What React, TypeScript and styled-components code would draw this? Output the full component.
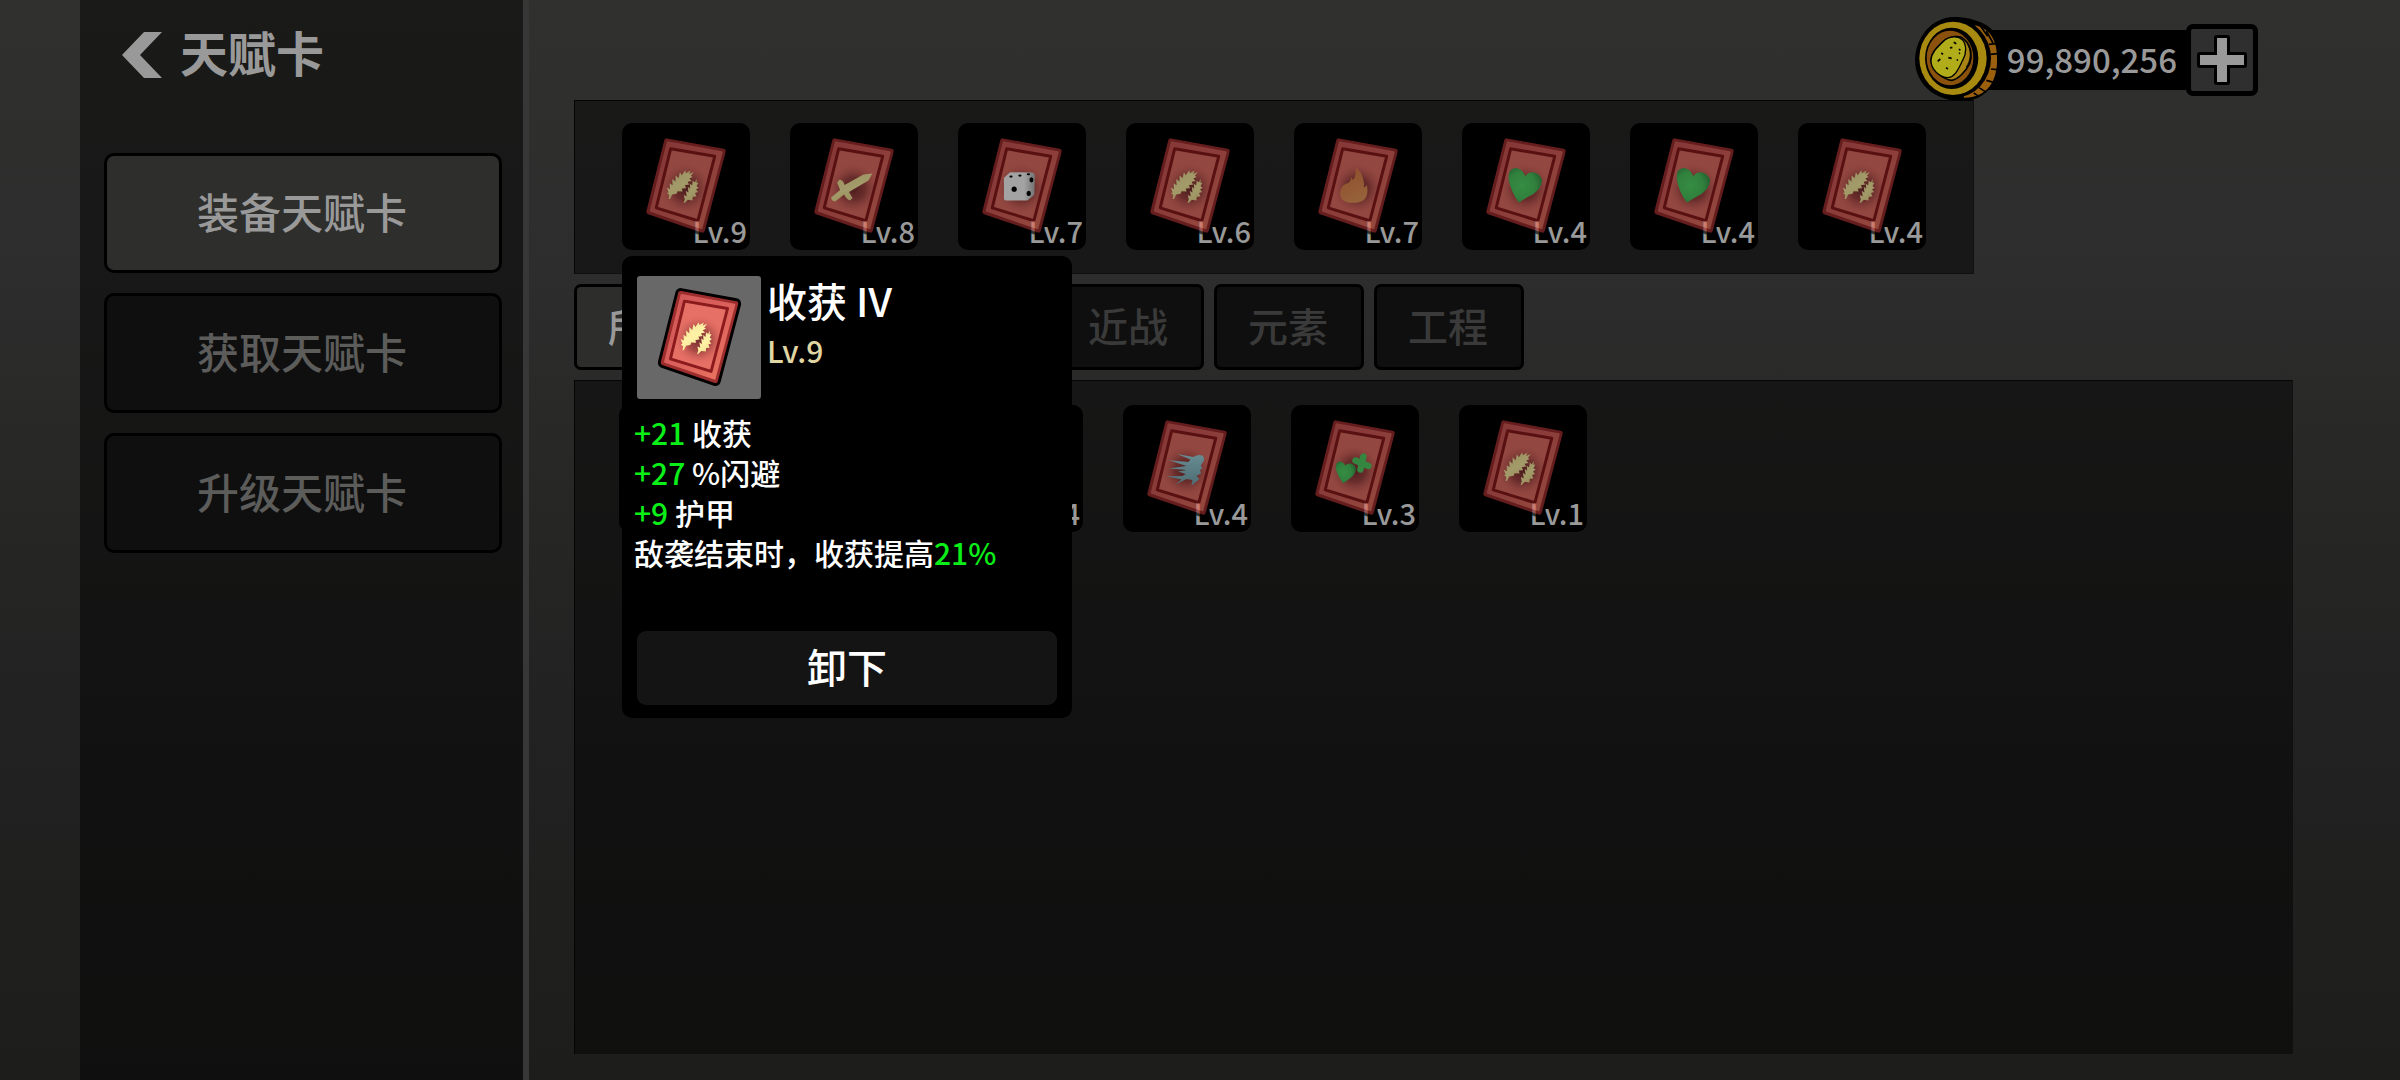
import React from "react";
import styled, { createGlobalStyle } from "styled-components";

const GlobalStyle = createGlobalStyle`
  *, *::before, *::after { box-sizing: border-box; }
  body {
    margin: 0;
    background: #1c1c1b;
    color: #999;
    font-family: "Noto Sans CJK SC", "Noto Sans", sans-serif;
    font-weight: 500;
  }
  button {
    font: inherit;
    color: inherit;
    padding: 0;
    cursor: pointer;
  }
  ul, h1, h2, p { margin: 0; padding: 0; font: inherit; list-style: none; }
`;

const Page = styled.div`
  display: flex;
  min-height: 100vh;
  padding-left: 80px;
  background: linear-gradient(180deg, #30302f 0%, #2d2d2d 25%, #272726 45%, #222222 65%, #1d1d1c 100%);
`;

const Sidebar = styled.aside`
  flex: 0 0 449px;
  display: flex;
  flex-direction: column;
  gap: 63px;
  padding: 19px 21px 20px 24px;
  border-right: 6px solid #373737;
  background: rgba(0, 0, 0, 0.46);
  background-clip: padding-box;
`;

const TitleRow = styled.header`
  display: flex;
  align-items: center;
  gap: 18px;
  height: 71px;
  padding-left: 18px;
`;

const BackButton = styled.button`
  display: flex;
  border: 0;
  background: none;
`;

const Title = styled.h1`
  padding-bottom: 8px;
  font-size: 48px;
  line-height: 60px;
  font-weight: 700;
`;

const Menu = styled.nav`
  display: flex;
  flex-direction: column;
  gap: 20px;
`;

const MenuButton = styled.button<{ $active?: boolean }>`
  height: 120px;
  padding: 0 2px 5px 0;
  border: 3px solid #000;
  border-radius: 10px;
  background: ${(p) => (p.$active ? "#2e2e2d" : "#0f0f0f")};
  color: ${(p) => (p.$active ? "#999" : "#5c5c5b")};
  font-size: 42px;
`;

const Main = styled.main`
  flex: 1;
  min-width: 0;
  display: flex;
  flex-direction: column;
  align-items: stretch;
  padding: 0 107px 26px 45px;
`;

const TopBar = styled.div`
  position: relative;
  z-index: 1;
  display: flex;
  align-items: center;
  justify-content: flex-end;
  height: 100px;
  padding: 20px 35px 0 0;
`;

const Wallet = styled.div`
  display: flex;
  align-items: center;
`;

const Balance = styled.output`
  height: 60px;
  margin-left: -24px;
  padding: 0 9px 0 32px;
  background: #000;
  font-size: 33px;
  line-height: 58px;
`;

const CoinBox = styled.span`
  position: relative;
  z-index: 1;
  display: flex;
  padding-bottom: 2px;
`;

const AddButton = styled.button`
  display: grid;
  place-items: center;
  width: 72px;
  height: 72px;
  border: 5px solid #000;
  border-radius: 7px;
  background: #2f2f2f;
`;

const EquippedPanel = styled.ul`
  display: flex;
  gap: 40px;
  width: fit-content;
  padding: 22px 47px 23px;
  border: 1px solid #050505;
  border-right-color: #101010;
  border-bottom-color: #101010;
  background: rgba(0, 0, 0, 0.46);
`;

const Tabs = styled.div`
  display: flex;
  gap: 10px;
  padding: 10px 0;
`;

const Tab = styled.button<{ $active?: boolean }>`
  width: 150px;
  height: 86px;
  padding: 0 2px 4px 0;
  border: 3px solid #000;
  border-radius: 7px;
  background: ${(p) => (p.$active ? "#2d2d2c" : "#0f0f0f")};
  color: ${(p) => (p.$active ? "#999" : "#3a3a3a")};
  font-size: 40px;
  line-height: 60px;
`;

const Inventory = styled.ul`
  flex: 1;
  display: flex;
  flex-wrap: wrap;
  align-content: flex-start;
  gap: 40px;
  padding: 24px 44px;
  border: 1px solid #050505;
  border-right-color: #101010;
  border-bottom-color: #101010;
  background: rgba(0, 0, 0, 0.46);
`;

const Slot = styled.li`
  position: relative;
`;

const CardButton = styled.button`
  display: grid;
  width: 128px;
  height: 127px;
  border: 0;
  border-radius: 10px;
  background: #000;

  & > * { grid-area: 1 / 1; }
  & > svg { opacity: 0.64; }
`;

const Level = styled.span`
  place-self: end;
  padding: 0 3px 2px 0;
  font-size: 29px;
  line-height: 36px;
`;

const Popover = styled.section`
  position: absolute;
  z-index: 2;
  top: 133px;
  left: 0;
  display: flex;
  flex-direction: column;
  width: 450px;
  height: 462px;
  padding: 20px 15px 13px;
  border-radius: 10px;
  background: #000;
  color: #fff;
`;

const PopoverHead = styled.div`
  display: flex;
  gap: 6px;
`;

const Thumb = styled.div`
  display: flex;
  width: 124px;
  height: 123px;
  border-radius: 3px;
  background: #686868;
`;

const CardName = styled.h2`
  font-size: 40px;
  line-height: 48px;
`;

const CardLevel = styled.p`
  color: #e0d6a4;
  font-size: 30px;
  line-height: 52px;
`;

const Effects = styled.ul`
  flex: 1;
  margin: 13px -3px 0;
  font-size: 30px;
  line-height: 40px;
  white-space: nowrap;
`;

const Gain = styled.span`
  color: #0bef18;
`;

const RemoveButton = styled.button`
  height: 74px;
  padding-bottom: 5px;
  border: 0;
  border-radius: 9px;
  background: #141414;
  font-size: 40px;
  line-height: 60px;
`;

type Emblem = "wheat" | "sword" | "dice" | "flame" | "heart" | "dash" | "regen";

const emblems: Record<Emblem, React.ReactNode> = {
  wheat: (
    <g transform="translate(-2 -3) scale(0.33333)" fill="url(#wheatFill)">
      <path d="M147 239L149 227L142 221L147 219L141 204L151 209L150 191L159 197L158 178L168 186L168 167L177 176L181 158L187 167L197 152L199 161L213 153L209 163L223 157L214 169L220 172L209 177L217 184L204 187L209 195L196 197L200 206L187 207L189 216L174 215L171 223L158 225L151 239Z" />
      <path d="M192 251L196 240L193 227L202 231L199 214L207 220L205 202L212 208L211 192L218 198L220 183L226 189L232 178L231 190L237 189L231 200L238 204L230 210L236 218L227 221L231 231L220 232L219 243L205 241L196 250Z" />
    </g>
  ),
  sword: (
    <path
      fill="url(#wheatFill)"
      d="M83 51L74 52L55 62.500Q54 58 50 57L47.500 60L50.500 67.500L41.500 75Q41.500 78.500 45.500 79L54.500 72Q57 77 60.500 78L63 75.500L59.500 69.500L79 58Z"
    />
  ),
  dice: (
    <g>
      <path fill="url(#diceFill)" d="M46.300 55.500L51.500 50.500Q52 49.700 54 49.700L75 50Q77.500 50.300 77.500 53L77 71Q77 72.500 75.500 73.500L70.500 77.500Q69.500 78.200 68 78.200L48 78Q46.300 78 46.300 76Z" />
      <g fill="#000">
        <circle cx="56.600" cy="66.700" r="2.600" />
        <ellipse cx="74" cy="57.300" rx="2" ry="2.600" />
        <ellipse cx="71.300" cy="71" rx="2.200" ry="2.600" />
        <ellipse cx="53.400" cy="54" rx="1.700" ry="1.100" />
        <ellipse cx="62.400" cy="53" rx="1.700" ry="1.100" />
        <ellipse cx="71" cy="51.700" rx="1.700" ry="1" />
      </g>
    </g>
  ),
  flame: (
    <path
      fill="url(#flameFill)"
      d="M63.500 45.500Q69 51 70 58Q71 62 70.300 65L73.500 63Q75.500 73 70.500 77.500Q66 80.500 59.300 80.500Q52 80.300 48.500 77Q45 72 47.500 66.500Q49 62 54.500 60.500Q57.500 59 57.500 54.500L59.500 57.500Q63 52 62 46Z"
    />
  ),
  heart: (
    <path
      fill="url(#heartFill)"
      d="M57.300 80.500Q48.500 68 47 56Q46.500 46 53 45.500Q60 45 63.700 53.500Q67.500 48.500 73 49.800Q80 52 80.800 58Q80 66 72 71.500Q64 75.500 57.300 80.500Z"
    />
  ),
  dash: (
    <path
      fill="url(#dashFill)"
      d="M54.500 49.300L71 52.500Q75 49.500 80 50.800Q82.500 53 81.500 56L78.500 61L80 64.500L77.500 65L78.500 69L74 71.500L77 74.500L69 81.500L70 75.500L64 74.500L52.500 80.500L59 75L43.800 71.700L60 71.500L63 69.500L55.600 67L64 65.500L46.300 64L64 61.500L46.300 55.700L66 57.500L68 55Z"
    />
  ),
  regen: (
    <g>
      <path fill="url(#heartFill)" d="M52.600 79Q46 70 45 63Q45 57.300 49 57Q52.500 57 54.700 61Q57 58.300 60 59Q65.500 60.500 65.500 64.500Q65 69.500 60.500 73Z" />
      <path fill="none" stroke="#52d264" strokeWidth="6.500" strokeLinecap="round" d="M73 52L70 65M65 56L78 61.500" />
    </g>
  ),
};

function CardDefs() {
  return (
    <svg width="0" height="0" style={{ position: "absolute" }} aria-hidden="true">
      <defs>
        <radialGradient id="shade" gradientUnits="userSpaceOnUse" cx="64" cy="66" r="26">
          <stop offset="0" stopColor="#702a2c" stopOpacity="0.95" />
          <stop offset="0.45" stopColor="#883636" stopOpacity="0.7" />
          <stop offset="1" stopColor="#e2685f" stopOpacity="0" />
        </radialGradient>
        <linearGradient id="frame" x1="0" y1="0" x2="1" y2="1">
          <stop offset="0" stopColor="#d05656" />
          <stop offset="0.5" stopColor="#da605c" />
          <stop offset="1" stopColor="#ee7860" />
        </linearGradient>
        <linearGradient id="wheatFill" x1="0" y1="0" x2="0.6" y2="1">
          <stop offset="0" stopColor="#f2e294" />
          <stop offset="0.6" stopColor="#fff2a6" />
          <stop offset="1" stopColor="#f0de8e" />
        </linearGradient>
        <linearGradient id="diceFill" x1="0" y1="0" x2="1" y2="0">
          <stop offset="0" stopColor="#fff" />
          <stop offset="0.65" stopColor="#fff" />
          <stop offset="1" stopColor="#b4b4b4" />
        </linearGradient>
        <linearGradient id="flameFill" x1="0" y1="0" x2="0.4" y2="1">
          <stop offset="0" stopColor="#e07848" />
          <stop offset="1" stopColor="#eb9a5a" />
        </linearGradient>
        <radialGradient id="heartFill" cx="0.4" cy="0.5" r="0.65">
          <stop offset="0" stopColor="#55dc68" />
          <stop offset="0.6" stopColor="#4cca60" />
          <stop offset="1" stopColor="#359048" />
        </radialGradient>
        <linearGradient id="dashFill" x1="0" y1="0" x2="0" y2="1">
          <stop offset="0" stopColor="#a4dce6" />
          <stop offset="1" stopColor="#78aab4" />
        </linearGradient>
      </defs>
    </svg>
  );
}

function TalentCard({ emblem, size }: { emblem: Emblem; size: number }) {
  return (
    <svg width={size} height={size} viewBox="0 0 128 128" aria-hidden="true">
      <g strokeLinejoin="round">
        <path d="M45 18L102 28.500L81 108L27 89.500Z" fill="#000" stroke="#000" strokeWidth="11" />
        <path d="M45 18L102 28.500L81 108L27 89.500Z" fill="#9e2e2e" stroke="#9e2e2e" strokeWidth="5" />
        <path d="M46 19.500L100.500 29.500L80 106L29 88.500Z" fill="url(#frame)" stroke="url(#frame)" strokeWidth="2" />
        <path d="M49 26L93.500 33.500L76.500 98.500L34.500 85.500Z" fill="#e67066" stroke="#8a1a1c" strokeWidth="3" />
        <path d="M50.500 28.500L91.500 35L76 96L36.500 84Z" fill="url(#shade)" />
      </g>
      {emblems[emblem]}
    </svg>
  );
}

function Coin() {
  return (
    <svg width="84" height="84" viewBox="104 50 252 252" aria-hidden="true">
      <path d="M225 50C260 50 330 66 344 102C358 140 358 200 344 238C328 276 290 302 250 302C165 306 104 250 104 180C106 105 160 48 225 50Z" fill="#000" />
      <path d="M285 75C325 85 340 110 347 140C354 180 350 222 335 247C320 275 290 292 250 292Z" fill="#9a600e" />
      <path d="M300 76L322 108M318 92L338 128M326 132L348 130M330 162L352 160M332 206L350 208M318 240L340 246M296 262L318 276M280 278L296 288" stroke="#000" strokeWidth="5" />
      <ellipse cx="222" cy="174" rx="110" ry="118" fill="#000" />
      <ellipse cx="218" cy="174" rx="101" ry="110" fill="#a88a10" />
      <ellipse cx="214" cy="174" rx="80" ry="92" fill="#000" />
      <ellipse cx="209" cy="173" rx="70" ry="82" fill="#8a520c" />
      <path d="M152 178C154 155 172 140 188 124C206 108 240 102 252 118C274 138 276 168 268 190C256 214 232 238 214 240C190 238 154 212 152 178Z" fill="#a88414" stroke="#000" strokeWidth="5" />
      <path d="M152 178C154 155 172 140 188 124C206 106 234 106 246 118C260 134 258 160 248 178C236 200 228 228 204 232C180 232 150 208 152 178Z" fill="#b0ac1a" stroke="#000" strokeWidth="4" />
      <path d="M262 132C274 152 272 180 258 200" fill="none" stroke="#000" strokeWidth="3" />
      <path d="M220 126L228 130M209 143L216 141M183 158L188 162M172 183L180 176M204 172L214 174M197 202L203 206M229 180L233 178M236 146L240 150M236 160L239 158" stroke="#000" strokeWidth="5" />
    </svg>
  );
}

const equipped: { emblem: Emblem; level: number }[] = [
  { emblem: "wheat", level: 9 },
  { emblem: "sword", level: 8 },
  { emblem: "dice", level: 7 },
  { emblem: "wheat", level: 6 },
  { emblem: "flame", level: 7 },
  { emblem: "heart", level: 4 },
  { emblem: "heart", level: 4 },
  { emblem: "wheat", level: 4 },
];

const owned: { emblem: Emblem; level: number }[] = [
  { emblem: "sword", level: 5 },
  { emblem: "flame", level: 5 },
  { emblem: "heart", level: 4 },
  { emblem: "dash", level: 4 },
  { emblem: "regen", level: 3 },
  { emblem: "wheat", level: 1 },
];

const menu = ["装备天赋卡", "获取天赋卡", "升级天赋卡"];
const tabs = ["所有", "通用", "远程", "近战", "元素", "工程"];

function CardPopover() {
  return (
    <Popover aria-label="收获 IV">
      <PopoverHead>
        <Thumb>
          <TalentCard emblem="wheat" size={124} />
        </Thumb>
        <div>
          <CardName>收获 IV</CardName>
          <CardLevel>Lv.9</CardLevel>
        </div>
      </PopoverHead>
      <Effects>
        <li><Gain>+21</Gain> 收获</li>
        <li><Gain>+27</Gain> %闪避</li>
        <li><Gain>+9</Gain> 护甲</li>
        <li>敌袭结束时，收获提高<Gain>21%</Gain></li>
      </Effects>
      <RemoveButton type="button">卸下</RemoveButton>
    </Popover>
  );
}

export default function App() {
  return (
    <>
      <GlobalStyle />
      <CardDefs />
      <Page>
        <Sidebar>
          <TitleRow>
            <BackButton type="button" aria-label="返回">
              <svg width="40" height="46" viewBox="0 0 40 46" aria-hidden="true">
                <path d="M22 0H40L18 23L40 46H22L0 23Z" fill="#999" />
              </svg>
            </BackButton>
            <Title>天赋卡</Title>
          </TitleRow>
          <Menu>
            {menu.map((label, i) => (
              <MenuButton key={label} type="button" $active={i === 0}>{label}</MenuButton>
            ))}
          </Menu>
        </Sidebar>
        <Main>
          <TopBar>
            <Wallet>
              <CoinBox><Coin /></CoinBox>
              <Balance>99,890,256</Balance>
              <AddButton type="button" aria-label="充值">
                <svg width="52" height="52" viewBox="0 0 52 52" aria-hidden="true">
                  <path d="M21 4H31V21H48V31H31V48H21V31H4V21H21Z" fill="#999" stroke="#000" strokeWidth="6" strokeLinejoin="round" paintOrder="stroke" />
                </svg>
              </AddButton>
            </Wallet>
          </TopBar>
          <EquippedPanel>
            {equipped.map((card, i) => (
              <Slot key={i}>
                <CardButton type="button">
                  <TalentCard emblem={card.emblem} size={127} />
                  <Level>Lv.{card.level}</Level>
                </CardButton>
                {i === 0 && <CardPopover />}
              </Slot>
            ))}
          </EquippedPanel>
          <Tabs>
            {tabs.map((label, i) => (
              <Tab key={label} type="button" $active={i === 0}>{label}</Tab>
            ))}
          </Tabs>
          <Inventory>
            {owned.map((card, i) => (
              <Slot key={i}>
                <CardButton type="button">
                  <TalentCard emblem={card.emblem} size={127} />
                  <Level>Lv.{card.level}</Level>
                </CardButton>
              </Slot>
            ))}
          </Inventory>
        </Main>
      </Page>
    </>
  );
}
